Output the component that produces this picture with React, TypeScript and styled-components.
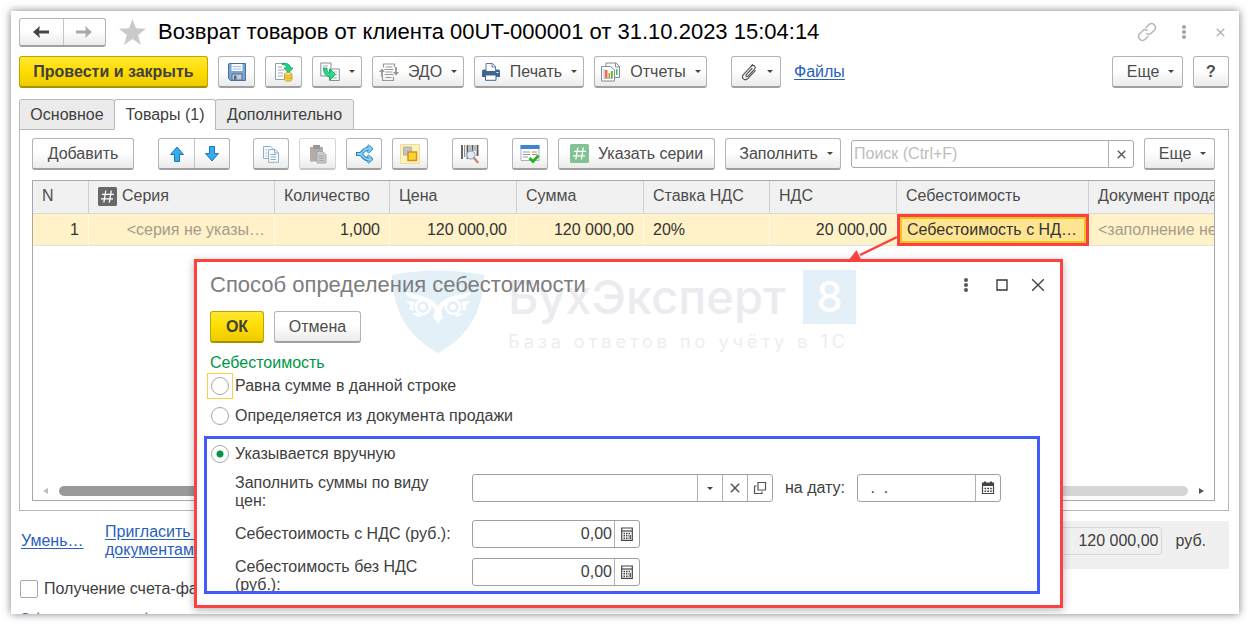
import React from 'react';
import styled, { createGlobalStyle, css } from 'styled-components';

const GlobalStyle = createGlobalStyle`
  *, *::before, *::after { box-sizing: border-box; }
  html, body { margin: 0; background: #fff; overflow: hidden; }
  body, button, input {
    font-family: "Liberation Sans", Arial, sans-serif;
    font-size: 16px;
    line-height: 18px;
    color: #404040;
  }
  svg { display: block; flex: none; }
`;

/* ---------- window ---------- */

const Window = styled.main`
  position: relative;
  display: flex;
  flex-direction: column;
  height: calc(100vh - 22px);
  margin: 11px;
  padding: 6px 10px 0 8px;
  overflow: hidden;
  background: #fff;
`;

const Shade = styled.div`
  display: flow-root;
  height: 100vh;
  & > ${Window} { box-shadow: 0 0 8px rgba(0, 0, 0, 0.5); }
`;

const Header = styled.header`
  display: flex;
  align-items: center;
  height: 30px;
`;

const Title = styled.h1`
  flex: 1;
  margin: 0;
  font-size: 22px;
  line-height: 28px;
  font-weight: 400;
  color: #000;
  white-space: nowrap;
`;

const Star = styled.span`
  margin: 0 11px 0 12px;
`;

const HeaderTools = styled.div`
  display: flex;
  align-items: center;
  gap: 18px;
`;

const GhostButton = styled.button`
  display: flex;
  align-items: center;
  justify-content: center;
  min-width: 18px;
  height: 20px;
  padding: 0;
  border: 0;
  background: none;
`;

/* ---------- buttons ---------- */

const buttonFace = css`
  border: 1px solid #b4b4b4;
  border-bottom: 2px solid #a0a0a0;
  border-radius: 3px;
  background: linear-gradient(#fff 45%, #ebebeb);
`;

const Button = styled.button<{ $w: number; $primary?: boolean; $faded?: boolean; $menu?: boolean }>`
  ${buttonFace}
  display: flex;
  flex: none;
  align-items: center;
  justify-content: center;
  gap: 9px;
  width: ${p => p.$w}px;
  height: 32px;
  padding: 0 0 0 ${p => (p.$menu ? 6 : 0)}px;
  color: #4c4c4c;
  white-space: nowrap;
  ${p => p.$faded && css`border-color: #d6d6d6; border-bottom-color: #c8c8c8;`}
  ${p => p.$primary && css`
    border-color: #bfa400;
    border-bottom-color: #a89000;
    background: linear-gradient(#ffe834, #ffdd00 50%, #eccb00);
    font-weight: 700;
    color: #404040;
  `}
`;

const ButtonPair = styled.div<{ $w: number; $h: number }>`
  ${buttonFace}
  display: grid;
  grid-template-columns: 1fr 1fr;
  flex: none;
  width: ${p => p.$w}px;
  height: ${p => p.$h}px;
`;

const PairButton = styled.button`
  display: flex;
  align-items: center;
  justify-content: center;
  padding: 0;
  border: 0;
  background: none;
  & + & { border-left: 1px solid #c4c4c4; }
`;

const Caret = styled.span`
  width: 0;
  border: 3px solid transparent;
  border-top-color: #444;
  border-bottom: 0;
`;

const Bar = styled.div`
  display: flex;
  align-items: center;
  gap: 10px;
`;

const CommandBar = styled(Bar)`
  margin-top: 9px;
`;

const Spacer = styled.span<{ $w?: number }>`
  ${p => (p.$w ? `flex: none; width: ${p.$w}px;` : 'flex: 1;')}
`;

const Link = styled.a`
  color: #2a5fbd;
  text-decoration: underline;
  text-underline-offset: 2px;
  white-space: nowrap;
`;

const FilesLink = styled(Link)`
  margin: 0 3px;
`;

/* ---------- tabs and panel ---------- */

const Tabs = styled.nav`
  display: flex;
  margin-top: 11px;
`;

const Tab = styled.button<{ $active?: boolean; $w: number }>`
  position: relative;
  width: ${p => p.$w}px;
  height: 31px;
  margin-bottom: -1px;
  margin-right: -1px;
  padding: 0;
  border: 1px solid #b8b8b8;
  border-radius: 3px 3px 0 0;
  background: ${p => (p.$active ? '#fff' : '#ebebeb')};
  border-bottom-color: ${p => (p.$active ? '#fff' : '#b8b8b8')};
  white-space: nowrap;
`;

const Panel = styled.section`
  display: flex;
  flex: 1;
  flex-direction: column;
  min-height: 0;
  padding: 8px 13px 9px 12px;
  border: 1px solid #b8b8b8;
`;

const SearchBox = styled.div`
  display: flex;
  flex: 1;
  height: 28px;
  border: 1px solid #a8a8a8;
  border-radius: 3px;
`;

const SearchInput = styled.input`
  flex: 1;
  min-width: 0;
  padding: 0 2px;
  border: 0;
  background: none;
  &::placeholder { color: #bdbdbd; opacity: 1; }
`;

const TableBox = styled.div`
  display: flex;
  flex: 1;
  flex-direction: column;
  min-height: 0;
  margin-top: 10px;
  overflow: hidden;
  border: 1px solid #a8a8a8;
`;

const Table = styled.table`
  width: 1290px;
  table-layout: fixed;
  border-collapse: separate;
  border-spacing: 0;
`;

const Th = styled.th`
  height: 33px;
  padding: 0 0 2px 9px;
  border-right: 1px solid #cfcfcf;
  border-bottom: 1px solid #d8d8d8;
  background: #f1f1f1;
  font-weight: 400;
  text-align: left;
  color: #4c4c4c;
  white-space: nowrap;
`;

const SeriesHead = styled.span`
  display: flex;
  align-items: center;
  gap: 5px;
`;

const Td = styled.td<{ $right?: boolean; $hint?: boolean }>`
  height: 32px;
  padding: 0 9px;
  border-right: 1px solid #fff9e6;
  border-bottom: 1px solid #e2e2e2;
  background: #fff2c8;
  overflow: hidden;
  text-align: ${p => (p.$right ? 'right' : 'left')};
  text-overflow: ellipsis;
  white-space: nowrap;
  color: ${p => (p.$hint ? '#a39d8c' : '#333')};
`;

const PickedTd = styled(Td)`
  padding: 0 4px 0 10px;
  border: 0;
  background: #ffe591;
  box-shadow: inset 0 0 0 3px #fc4141, inset 0 0 0 5px #f5c31c;
`;

const ScrollRow = styled.div`
  display: flex;
  align-items: center;
  gap: 11px;
  margin-top: auto;
  padding: 0 10px 4px;
`;

const ScrollTrack = styled.div`
  flex: 1;
  height: 10px;
  border-radius: 5px;
  background: linear-gradient(90deg, #999 60%, #d5d5d5 60%);
`;

const ScrollArrow = styled.span<{ $right?: boolean }>`
  border: 3px solid transparent;
  ${p => (p.$right
    ? 'border-left: 5px solid #555; border-right: 0;'
    : 'border-right: 5px solid #bbb; border-left: 0;')}
`;

/* ---------- footer ---------- */

const Footer = styled.footer`
  margin: 10px 0 -15px;
`;

const FooterRow = styled.div`
  display: flex;
  align-items: flex-start;
  height: 48px;
  padding-left: 2px;
`;

const FooterLink = styled(Link)<{ $top: number; $w: number }>`
  width: ${p => p.$w}px;
  margin-top: ${p => p.$top}px;
`;

const Totals = styled.div`
  display: flex;
  align-items: flex-start;
  gap: 13px;
  width: 400px;
  height: 48px;
  margin-left: auto;
  padding: 6px 23px 0 0;
  background: #f0f0f0;
`;

const TotalInput = styled.input`
  flex: 1;
  min-width: 0;
  height: 28px;
  padding: 0 3px;
  border: 1px solid #d8d8d8;
  border-radius: 3px;
  background: none;
  text-align: right;
`;

const Unit = styled.span`
  padding-top: 5px;
`;

const CheckLabel = styled.label`
  display: flex;
  align-items: center;
  gap: 6px;
  height: 18px;
  margin: 11px 0 13px;
`;

const CheckBox = styled.input`
  appearance: none;
  width: 18px;
  height: 18px;
  margin: 0 0 0 1px;
  border: 1px solid #a8a8a8;
  border-radius: 2px;
  background: #fff;
`;

/* ---------- dialog ---------- */

const Pointer = styled.svg`
  position: absolute;
  top: 222px;
  left: 836px;
`;

const Dialog = styled.section`
  position: absolute;
  top: 248px;
  right: 176px;
  bottom: 6px;
  left: 183px;
  display: flex;
  flex-direction: column;
  padding: 10px 13px 11px 7px;
  border: 3px solid #fc4141;
  background: #fff;
  box-shadow: 0 2px 8px rgba(0, 0, 0, 0.3);
`;

const DialogHead = styled.header`
  position: relative;
  display: flex;
  align-items: center;
  height: 26px;
  margin-left: 6px;
`;

const DialogTitle = styled.h2`
  flex: 1;
  margin: 0;
  font-size: 22px;
  line-height: 26px;
  font-weight: 400;
  color: #7d7d7d;
`;

const DialogActions = styled(Bar)`
  position: relative;
  margin: 13px 0 0 6px;
`;

const GroupName = styled.h3`
  margin: 11px 0 1px 6px;
  font-size: 16px;
  line-height: 18px;
  font-weight: 400;
  color: #009646;
`;

const RadioLabel = styled.label<{ $gap?: number }>`
  display: flex;
  flex: none;
  align-items: center;
  gap: 2px;
  height: 26px;
  margin: 0 0 ${p => p.$gap ?? 0}px 3px;
`;

const RadioSlot = styled.span<{ $focus?: boolean }>`
  display: flex;
  align-items: center;
  justify-content: center;
  width: 26px;
  height: 26px;
  border: 1px solid ${p => (p.$focus ? '#fccf45' : 'transparent')};
`;

const Radio = styled.input`
  appearance: none;
  width: 18px;
  height: 18px;
  margin: 0;
  border: 1px solid #a8a8a8;
  border-radius: 50%;
  background: #fff;
  &:checked { background: radial-gradient(circle, #009646 3px, #fff 4px); }
`;

const ManualFrame = styled.div`
  flex: 1;
  min-height: 0;
  margin-right: 7px;
  overflow: hidden;
  border: 3px solid #415cfa;
  & > ${RadioLabel} { margin: 2px 0 7px; }
`;

const FieldRow = styled.div<{ $gap: number }>`
  display: flex;
  align-items: flex-start;
  margin: 0 0 ${p => p.$gap}px 28px;
`;

const FieldLabel = styled.label<{ $top?: number }>`
  width: 237px;
  padding: ${p => p.$top ?? 0}px 16px 0 0;
`;

const Field = styled.div<{ $w: number }>`
  display: flex;
  flex: none;
  width: ${p => p.$w}px;
  height: 28px;
  border: 1px solid #a0a0a0;
  border-radius: 3px;
  background: #fff;
`;

const FieldInput = styled.input<{ $right?: boolean }>`
  flex: 1;
  min-width: 0;
  padding: 0 2px 0 8px;
  border: 0;
  background: none;
  text-align: ${p => (p.$right ? 'right' : 'left')};
`;

const FieldButton = styled.button`
  display: flex;
  flex: none;
  align-items: center;
  justify-content: center;
  width: 25px;
  padding: 0;
  border: 0;
  border-left: 1px solid #b0b0b0;
  background: none;
`;

const DateLabel = styled.label`
  padding: 5px 12px 0;
`;

/* ---------- brand mark behind the dialog ---------- */

const Brand = styled.div`
  position: absolute;
  top: 8px;
  left: 195px;
  display: flex;
  gap: 24px;
`;

const BrandName = styled.div`
  display: flex;
  justify-content: space-between;
  width: 348px;
  height: 54px;
  font-family: Inter, sans-serif;
  font-size: 47px;
  line-height: 54px;
  font-weight: 500;
  color: #ebebf0;
`;

const BrandEight = styled.span`
  width: 53px;
  background: #e3f0f8;
  font-size: 42px;
  text-align: center;
  color: #fff;
`;

const BrandLine = styled.div`
  margin-top: 6px;
  font-family: Inter, sans-serif;
  font-size: 18px;
  line-height: 24px;
  letter-spacing: 4px;
  white-space: nowrap;
  color: #ededf1;
`;

/* ---------- icons ---------- */

const Arrow = ({ back }: { back?: boolean }) => (
  <svg width="18" height="14" viewBox="0 0 18 14" fill={back ? '#444' : '#aaa'}>
    <path d={back ? 'M1 7 8 1 7 5.5H17V8.5H7L8 13Z' : 'M17 7 10 1 11 5.5H1V8.5H11L10 13Z'} />
  </svg>
);

const UpDown = ({ down }: { down?: boolean }) => (
  <svg width="16" height="18" viewBox="0 0 16 18">
    <path
      d={down ? 'M5.5 1.5H10.5V8.5H14.5L8 16 1.5 8.5H5.5Z' : 'M5.5 16.5H10.5V9.5H14.5L8 2 1.5 9.5H5.5Z'}
      fill="#38abee" stroke="#1879b8" strokeLinejoin="round"
    />
  </svg>
);

const SaveIcon = () => (
  <svg width="20" height="20" viewBox="0 0 20 20">
    <path d="M2 1.5H18.5V18.5H3.5L1.5 16.5V2Z" fill="#76a5d6" stroke="#44719f" />
    <path d="M4.500 2H15.500V9H4.500Z" fill="#f7fbff" />
    <path d="M6 4.500H14M6 7H14" stroke="#a9bdcf" />
    <path d="M5 12H15V18H5Z" fill="#c5ccd3" stroke="#52718f" />
    <path d="M7 13.500H9.500V17.500H7Z" fill="#47698c" />
  </svg>
);

const PostIcon = () => (
  <svg width="20" height="20" viewBox="0 0 20 20">
    <path d="M1.500 1.500H11L14 4V17.500H1.500Z" fill="#fff" stroke="#8fa1ac" />
    <path d="M4 5H8M4 8H10M4 11H9M4 14H9" stroke="#9fabb3" />
    <path d="M8 1.500C13 .5 16.500 3 16.500 6H19L14.500 11 10 6H12.500C12.500 4 11 2.500 8 2.500Z" fill="#1ed582" stroke="#0c9c58" strokeWidth=".8" />
    <path d="M10.500 12V17.500C10.500 19.800 18 19.800 18 17.500V12Z" fill="#f5d044" stroke="#c39a1c" strokeWidth=".8" />
    <ellipse cx="14.200" cy="12" rx="3.700" ry="1.500" fill="#fbe680" stroke="#c39a1c" strokeWidth=".8" />
    <path d="M10.500 15C11 16.700 17.500 16.700 18 15" fill="none" stroke="#c39a1c" strokeWidth=".8" />
  </svg>
);

const BasedOnIcon = () => (
  <svg width="20" height="20" viewBox="0 0 20 20">
    <path d="M.8 1H11V14H.8Z" fill="#fff" stroke="#7f919e" />
    <path d="M3 4H8M3 6.500H6" stroke="#a3afb8" />
    <path d="M9.500 7H19.300V18.500H9.500Z" fill="#fff" stroke="#7f919e" />
    <path d="M14 10H17M15 12.500H17M13 16H17" stroke="#a3afb8" />
    <path d="M3.500 6H7C7 9.500 8 10.500 10 10.500V7L15.500 12.500 10 18V14.700C6 14.700 3.500 11.500 3.500 6Z" fill="#27dc80" stroke="#0d9d55" strokeWidth=".8" />
  </svg>
);

const EdoIcon = () => (
  <svg width="20" height="20" viewBox="0 0 20 20" fill="none" stroke="#969696" strokeWidth="1.200">
    <path d="M4.500 5.500V2H15.500V5M3.500 15V18.500H14.500V15" />
    <path d="M6.500 5H13.500M5.500 7.500H14.500M6.500 10H13.500M5.500 12.500H14.500M6.500 15.500H12.500" />
    <path d="M3 15V9.500M17 5V10.500" strokeWidth="1.800" />
    <path d="M0 10 3 6.500 6 10ZM14 10 17 13.500 20 10Z" fill="#969696" stroke="none" />
  </svg>
);

const PrintIcon = () => (
  <svg width="20" height="20" viewBox="0 0 20 20">
    <path d="M5 9V1.500H11.500L14.500 4.500V9" fill="#fff" stroke="#5f7f9f" />
    <path d="M11 1.500V5H14.500" fill="none" stroke="#5f7f9f" />
    <path d="M2.500 7.500H5V9H15V7.500H17.500Q19 7.500 19 9.500V15H1V9.500Q1 7.500 2.500 7.500Z" fill="#3f6691" />
    <path d="M4.500 13H15V18.300H4.500Z" fill="#fff" stroke="#3f6691" />
    <path d="M15.500 10.500H17.500" stroke="#fff" />
  </svg>
);

const ReportIcon = () => (
  <svg width="21" height="20" viewBox="0 0 21 20">
    <path d="M6 1H16L19.500 4.500V15.500H6Z" fill="#fff" stroke="#7b8f9c" />
    <path d="M15.500 1V5H19.500" fill="none" stroke="#7b8f9c" />
    <path d="M1.500 4.500H10.500L14.500 8V19H1.500Z" fill="#fff" stroke="#7b8f9c" />
    <path d="M4 7V16.500H13" fill="none" stroke="#9aa9b3" strokeWidth=".8" />
    <path d="M5 8H7.500V16H5Z" fill="#ee6a52" />
    <path d="M8.500 11H10V16H8.500Z" fill="#e08235" />
    <path d="M10.800 9H12.800V16H10.800ZM16 7H17.500V13H16Z" fill="#55b848" />
  </svg>
);

const ClipIcon = () => (
  <svg width="18" height="18" viewBox="0 0 18 18" fill="none" stroke="#555" strokeWidth="1.200" strokeLinecap="round" strokeLinejoin="round">
    <path d="M12 5.500 6.300 11.700C5.300 12.900 6.800 14.300 8 13.100L14.300 6.300C16.500 3.700 13.600 1 11.300 3.200L3.600 11.300C.5 14.900 4.700 18.600 8 15.400L15.200 7.600" />
    <path d="M11.300 3.200 12.500 1.500" />
  </svg>
);

const LinkIcon = () => (
  <svg width="20" height="20" viewBox="0 0 20 20" fill="none" stroke="#b8b8b8" strokeWidth="1.600" strokeLinecap="round">
    <path d="M9 5.500 11.800 2.700A3.800 3.800 0 0 1 17.300 8.200L14.200 11.300C12.800 12.700 11 12.700 9.800 11.700" />
    <path d="M11 14.500 8.200 17.300A3.800 3.800 0 0 1 2.700 11.800L5.800 8.700C7.200 7.300 9 7.300 10.200 8.300" />
  </svg>
);

const Dots = ({ color }: { color: string }) => (
  <svg width="6" height="16" viewBox="0 0 6 16" fill={color}>
    <circle cx="3" cy="3" r="2" /><circle cx="3" cy="8" r="2" /><circle cx="3" cy="13" r="2" />
  </svg>
);

const Cross = ({ size, color }: { size: number; color: string }) => (
  <svg width={size} height={size} viewBox="0 0 12 12" stroke={color} strokeWidth={size < 12 ? 1.8 : 1.2}>
    <path d="M1 1 11 11M11 1 1 11" />
  </svg>
);

const CopyIcon = () => (
  <svg width="18" height="18" viewBox="0 0 18 18" fill="#f5fbff" stroke="#8fb0c4">
    <path d="M1.500 1.500H8.500L11.500 4V13.500H1.500Z" />
    <path d="M6.500 4.500H13L16.500 7.500V17.300H6.500Z" />
    <path d="M12.500 4.500V8H16.500M8.500 9.500H14M8.500 12H14M8.500 14.500H14M3.500 5H5M3.500 8H5M3.500 11H5" fill="none" />
  </svg>
);

const PasteIcon = () => (
  <svg width="18" height="20" viewBox="0 0 18 20">
    <path d="M1 3H14V17.500H1Z" fill="#b5aaa6" />
    <path d="M4 1H11V5H4Z" fill="#989898" />
    <path d="M8 7.500H13.500L17 10.500V19H8Z" fill="#c9cbd0" stroke="#a4a6ad" />
    <path d="M10 12H15M10 14.300H15M10 16.600H15" stroke="#9ea1a8" />
  </svg>
);

const SplitIcon = () => (
  <svg width="18" height="20" viewBox="0 0 18 20" fill="none" strokeLinejoin="round">
    <path d="M1 10H6M5 10C8 9.500 8 4.800 12.500 4.800H15M5 10C8 10.500 8 15.200 12.500 15.200H15" stroke="#2685bd" strokeWidth="3.800" />
    <path d="M12.500 1.500 16.500 4.800 12.500 8.500M12.500 11.500 16.500 15.200 12.500 18.500" stroke="#2685bd" strokeWidth="3" />
    <path d="M12.500 1.500 16.500 4.800 12.500 8.500M12.500 11.500 16.500 15.200 12.500 18.500" stroke="#8bd1f5" strokeWidth="1.400" />
    <path d="M2 10H6M5 10C8 9.500 8 4.800 12.500 4.800H16M5 10C8 10.500 8 15.200 12.500 15.200H16" stroke="#8bd1f5" strokeWidth="1.900" />
  </svg>
);

const LayersIcon = () => (
  <svg width="20" height="20" viewBox="0 0 20 20">
    <path d="M.5.500H19.500V19.500H.5Z" fill="#fdf1c0" stroke="#f0dc9a" />
    <path d="M3.500 3H11.500V11H3.500Z" fill="#c2c2c2" stroke="#b0b0b0" />
    <path d="M8 8H16.500V16.500H8Z" fill="#fcd337" stroke="#cc9612" strokeWidth="1.500" />
  </svg>
);

const BarcodeIcon = () => (
  <svg width="18" height="20" viewBox="0 0 18 20">
    <path d="M1 1V15M6.500 1V15M11.500 1V9M16.500 1V12" stroke="#555" strokeWidth="1.800" />
    <path d="M3.700 1V13M9 1V7M14 1V7" stroke="#777" />
    <circle cx="10" cy="11" r="4" fill="#dceefb" stroke="#9fb2c4" strokeWidth="1.300" />
    <path d="M13 14 16.500 18" stroke="#c08b70" strokeWidth="2.400" strokeLinecap="round" />
  </svg>
);

const SheetCheckIcon = () => (
  <svg width="20" height="20" viewBox="0 0 20 20">
    <path d="M1 1.500H19V16.500H1Z" fill="#fff" stroke="#a3b2bd" />
    <path d="M.5 1H19.500V5H.5Z" fill="#3a86d0" />
    <path d="M3 8H10M3 10.500H10M3 13H8" stroke="#999" />
    <path d="M12 8H17M12 10.500H17" stroke="#e27466" />
    <path d="M9.500 14 13 17.500 18.500 11.500" fill="none" stroke="#21b321" strokeWidth="2.800" />
  </svg>
);

const HashIcon = ({ color }: { color: string }) => (
  <svg width="19" height="19" viewBox="0 0 19 19">
    <rect width="19" height="19" rx="1.500" fill={color} />
    <path d="M7.800 3.500 5.800 15.500M13.300 3.500 11.300 15.500M4 7.300H16M3 11.800H15" stroke="#fff" strokeWidth="1.300" />
  </svg>
);

const OpenIcon = () => (
  <svg width="14" height="14" viewBox="0 0 14 14" fill="none" stroke="#555" strokeWidth="1.200">
    <path d="M5 1.500H12.500V9H5ZM3.500 5H1.500V12.500H9V10.500" />
  </svg>
);

const CalendarIcon = () => (
  <svg width="14" height="14" viewBox="0 0 14 14">
    <path d="M1.500 2H12.500V12.500H1.500Z" fill="#fff" stroke="#444" strokeWidth="1.200" />
    <path d="M1 2H13V5H1Z" fill="#444" />
    <path d="M4 .5V3M10 .5V3" stroke="#444" strokeWidth="2" />
    <path d="M3.500 7.500H11M3.500 10.300H11" stroke="#444" strokeWidth="1.600" strokeDasharray="1.700 1.100" />
  </svg>
);

const CalcIcon = () => (
  <svg width="12" height="14" viewBox="0 0 12 14">
    <path d="M.7 1H11.300V13.300H.7Z" fill="#fff" stroke="#444" strokeWidth="1.200" />
    <path d="M1 4H11" stroke="#444" strokeWidth="1.200" />
    <path d="M2.500 6.500H10M2.500 8.800H8M2.500 11.200H8" stroke="#444" strokeWidth="1.400" strokeDasharray="1.500 1" />
    <path d="M9.200 8V12" stroke="#444" strokeWidth="1.400" />
  </svg>
);

const OwlShield = () => (
  <svg width="92" height="84" viewBox="0 0 92 84">
    <path d="M0 5Q46-4 92 5C91 36 81 64 46 83C11 64 1 36 0 5Z" fill="#e3f0f8" />
    <g fill="#fff">
      <path d="M13 22C24 25 38 25 46 36C54 25 68 25 79 22C77 26 74 28 70 29C61 29 52 33 49 41L51 47 46 54 41 47 43 41C40 33 31 29 22 29C18 28 15 26 13 22Z" />
      <path d="M14 31 23 32C21 35 21 38 22 41L17 39 19 36ZM78 31 69 32C71 35 71 38 70 41L75 39 73 36Z" />
      <path d="M20 43 24 43 30 46 26 47ZM72 43 68 43 62 46 66 47Z" />
      <circle cx="31" cy="37" r="3" /><circle cx="61" cy="37" r="3" />
    </g>
    <g fill="none" stroke="#fff" strokeWidth="2.500">
      <circle cx="31" cy="37" r="7" /><circle cx="61" cy="37" r="7" />
    </g>
  </svg>
);

/* ---------- data ---------- */

const widths = [56, 186, 115, 127, 127, 126, 127, 192, 234];

export default function App() {
  return (
    <Shade>
      <GlobalStyle />
      <Window>
        <Header>
          <ButtonPair $w={87} $h={29}>
            <PairButton aria-label="Назад"><Arrow back /></PairButton>
            <PairButton aria-label="Вперед"><Arrow /></PairButton>
          </ButtonPair>
          <Star>
            <svg width="29" height="28" viewBox="0 0 29 28" fill="#c8cacc">
              <path d="M14.500 1 18 10.300 28 10.700 20.100 16.900 23 27 14.500 21 6 27 8.900 16.900 1 10.700 11 10.300Z" />
            </svg>
          </Star>
          <Title>Возврат товаров от клиента 00UT-000001 от 31.10.2023 15:04:14</Title>
          <HeaderTools>
            <GhostButton aria-label="Ссылка"><LinkIcon /></GhostButton>
            <GhostButton aria-label="Меню"><Dots color="#a6a6a6" /></GhostButton>
            <GhostButton aria-label="Закрыть"><Cross size={9} color="#b0b0b0" /></GhostButton>
          </HeaderTools>
        </Header>

        <CommandBar>
          <Button $w={189} $primary>Провести и закрыть</Button>
          <Button $w={37} aria-label="Записать"><SaveIcon /></Button>
          <Button $w={37} aria-label="Провести"><PostIcon /></Button>
          <Button $w={50} aria-label="Создать на основании"><BasedOnIcon /><Caret /></Button>
          <Button $w={92}><EdoIcon />ЭДО<Caret /></Button>
          <Button $w={110}><PrintIcon />Печать<Caret /></Button>
          <Button $w={113}><ReportIcon />Отчеты<Caret /></Button>
          <Spacer $w={4} />
          <Button $w={50} aria-label="Присоединить"><ClipIcon /><Caret /></Button>
          <FilesLink href="#files">Файлы</FilesLink>
          <Spacer />
          <Button $w={71} $menu>Еще<Caret /></Button>
          <Button $w={36}><b>?</b></Button>
        </CommandBar>

        <Tabs>
          <Tab $w={96}>Основное</Tab>
          <Tab $w={102} $active>Товары (1)</Tab>
          <Tab $w={139}>Дополнительно</Tab>
        </Tabs>

        <Panel>
          <Bar>
            <Button $w={102}>Добавить</Button>
            <Spacer $w={4} />
            <ButtonPair $w={72} $h={32}>
              <PairButton aria-label="Вверх"><UpDown /></PairButton>
              <PairButton aria-label="Вниз"><UpDown down /></PairButton>
            </ButtonPair>
            <Spacer $w={3} />
            <Button $w={36} aria-label="Копировать"><CopyIcon /></Button>
            <Button $w={37} $faded aria-label="Вставить"><PasteIcon /></Button>
            <Button $w={36} aria-label="Разбить строку"><SplitIcon /></Button>
            <Button $w={36} aria-label="Подбор"><LayersIcon /></Button>
            <Spacer $w={4} />
            <Button $w={36} aria-label="Поиск по штрихкоду"><BarcodeIcon /></Button>
            <Spacer $w={4} />
            <Button $w={36} aria-label="Проверить"><SheetCheckIcon /></Button>
            <Button $w={157}><HashIcon color="#83c295" />Указать серии</Button>
            <Button $w={116} $menu>Заполнить<Caret /></Button>
            <SearchBox>
              <SearchInput aria-label="Поиск" placeholder="Поиск (Ctrl+F)" />
              <FieldButton aria-label="Очистить"><Cross size={9} color="#555" /></FieldButton>
            </SearchBox>
            <Button $w={71} $menu>Еще<Caret /></Button>
          </Bar>

          <TableBox>
            <Table>
              <colgroup>{widths.map((w, i) => <col key={i} style={{ width: w }} />)}</colgroup>
              <thead>
                <tr>
                  <Th>N</Th>
                  <Th><SeriesHead><HashIcon color="#686868" />Серия</SeriesHead></Th>
                  <Th>Количество</Th>
                  <Th>Цена</Th>
                  <Th>Сумма</Th>
                  <Th>Ставка НДС</Th>
                  <Th>НДС</Th>
                  <Th>Себестоимость</Th>
                  <Th>Документ продажи</Th>
                </tr>
              </thead>
              <tbody>
                <tr>
                  <Td $right>1</Td>
                  <Td $right $hint>&lt;серия не указы…</Td>
                  <Td $right>1,000</Td>
                  <Td $right>120 000,00</Td>
                  <Td $right>120 000,00</Td>
                  <Td>20%</Td>
                  <Td $right>20 000,00</Td>
                  <PickedTd>Себестоимость с НД…</PickedTd>
                  <Td $hint>&lt;заполнение не требуется&gt;</Td>
                </tr>
              </tbody>
            </Table>
            <ScrollRow>
              <ScrollArrow /><ScrollTrack /><ScrollArrow $right />
            </ScrollRow>
          </TableBox>
        </Panel>

        <Footer>
          <FooterRow>
            <FooterLink href="#less" $top={11} $w={84}>Умень…</FooterLink>
            <FooterLink href="#invite" $top={2} $w={120}>Пригласить к<br />документами</FooterLink>
            <Totals>
              <TotalInput aria-label="Всего" defaultValue="120 000,00" />
              <Unit>руб.</Unit>
            </Totals>
          </FooterRow>
          <CheckLabel><CheckBox type="checkbox" />Получение счета-фактуры</CheckLabel>
          <Link href="#invoice">Оформить счет-фактуру</Link>
        </Footer>

        <Dialog role="dialog" aria-label="Способ определения себестоимости">
          <Brand aria-hidden="true">
            <OwlShield />
            <div>
              <BrandName>БухЭксперт<BrandEight>8</BrandEight></BrandName>
              <BrandLine>База ответов по учёту в 1С</BrandLine>
            </div>
          </Brand>
          <DialogHead>
            <DialogTitle>Способ определения себестоимости</DialogTitle>
            <HeaderTools>
              <GhostButton aria-label="Меню"><Dots color="#555" /></GhostButton>
              <GhostButton aria-label="Развернуть">
                <svg width="12" height="12" fill="none" stroke="#333" strokeWidth="1.300"><path d="M1 1H11V11H1Z" /></svg>
              </GhostButton>
              <GhostButton aria-label="Закрыть"><Cross size={14} color="#444" /></GhostButton>
            </HeaderTools>
          </DialogHead>
          <DialogActions>
            <Button $w={54} $primary>ОК</Button>
            <Button $w={87}>Отмена</Button>
          </DialogActions>
          <GroupName>Себестоимость</GroupName>
          <RadioLabel $gap={4}>
            <RadioSlot $focus><Radio type="radio" name="cost" /></RadioSlot>Равна сумме в данной строке
          </RadioLabel>
          <RadioLabel $gap={7}>
            <RadioSlot><Radio type="radio" name="cost" /></RadioSlot>Определяется из документа продажи
          </RadioLabel>
          <ManualFrame>
            <RadioLabel>
              <RadioSlot><Radio type="radio" name="cost" defaultChecked /></RadioSlot>Указывается вручную
            </RadioLabel>
            <FieldRow $gap={10}>
              <FieldLabel htmlFor="kind">Заполнить суммы по виду цен:</FieldLabel>
              <Field $w={301}>
                <FieldInput id="kind" />
                <FieldButton aria-label="Выбрать"><Caret /></FieldButton>
                <FieldButton aria-label="Очистить"><Cross size={10} color="#555" /></FieldButton>
                <FieldButton aria-label="Открыть"><OpenIcon /></FieldButton>
              </Field>
              <DateLabel htmlFor="date">на дату:</DateLabel>
              <Field $w={144}>
                <FieldInput id="date" defaultValue=" .  ." />
                <FieldButton aria-label="Календарь"><CalendarIcon /></FieldButton>
              </Field>
            </FieldRow>
            <FieldRow $gap={10}>
              <FieldLabel htmlFor="with" $top={5}>Себестоимость с НДС (руб.):</FieldLabel>
              <Field $w={168}>
                <FieldInput id="with" $right defaultValue="0,00" />
                <FieldButton aria-label="Калькулятор"><CalcIcon /></FieldButton>
              </Field>
            </FieldRow>
            <FieldRow $gap={0}>
              <FieldLabel htmlFor="without">Себестоимость без НДС (руб.):</FieldLabel>
              <Field $w={168}>
                <FieldInput id="without" $right defaultValue="0,00" />
                <FieldButton aria-label="Калькулятор"><CalcIcon /></FieldButton>
              </Field>
            </FieldRow>
          </ManualFrame>
        </Dialog>

        <Pointer width="52" height="30" viewBox="0 0 52 30">
          <path d="M50 4 13 22" stroke="#fc4141" strokeWidth="2.500" />
          <path d="M1 28 9.500 17 14.500 27.500Z" fill="#fc4141" />
        </Pointer>
      </Window>
    </Shade>
  );
}
